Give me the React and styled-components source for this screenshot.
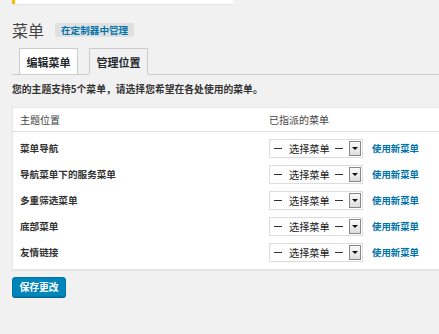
import React from "react";
import styled, { createGlobalStyle } from "styled-components";

const GlobalStyle = createGlobalStyle`
  html, body {
    margin: 0;
    padding: 0;
    background: #f1f1f1;
    overflow: hidden;
  }
  body {
    font-family: "Noto Sans CJK SC", "Liberation Sans", sans-serif;
    color: #444;
  }
`

const Page = styled.div`
  width: 439px;
  height: 334px;
  padding-left: 12px;
  box-sizing: border-box;
`

const Notice = styled.div`
  width: 218px;
  height: 4px;
  background: #fff;
  border-left: 3px solid #ffb900;
  box-shadow: 0 1px 1px rgba(0, 0, 0, 0.06);
`

const TitleRow = styled.div`
  display: flex;
  align-items: center;
  gap: 11px;
  margin-top: 15px;
  height: 22px;
`

const Title = styled.h1`
  margin: 0;
  font-size: 16px;
  font-weight: 400;
  color: #444;
  line-height: 22px;
`

const CustomizeLink = styled.a`
  display: inline-block;
  background: #e0e0e0;
  color: #0073aa;
  font-size: 9.6px;
  font-weight: 700;
  padding: 0 6px;
  height: 14px;
  line-height: 14px;
  border-radius: 2px;
  text-decoration: none;
`

const TabNav = styled.div`
  display: flex;
  gap: 11px;
  margin-top: 7px;
  padding-left: 7px;
  border-bottom: 1px solid #ccc;
  height: 26px;
`

const Tab = styled.div`
  width: 59px;
  box-sizing: border-box;
  border: 1px solid #ccc;
  border-bottom: ${p => (p.$active ? "1px solid #f1f1f1" : "none")};
  background: ${p => (p.$active ? "#f1f1f1" : "#fff")};
  color: #23282d;
  font-size: 11px;
  font-weight: 700;
  display: flex;
  align-items: center;
  justify-content: center;
  height: ${p => (p.$active ? "27px" : "26px")};
`

const Description = styled.p`
  margin: 7px 0 0;
  font-size: 9.8px;
  font-weight: 700;
  color: #333;
  line-height: 14px;
`

const Table = styled.div`
  margin-top: 11px;
  background: #fff;
  border: 1px solid #e5e5e5;
  border-right: none;
  box-shadow: 0 1px 1px rgba(0, 0, 0, 0.04);
  padding-bottom: 4px;
`

const HeadRow = styled.div`
  display: grid;
  grid-template-columns: 249px 1fr;
  height: 23px;
  align-items: center;
  border-bottom: 1px solid #e1e1e1;
  font-size: 10px;
  color: #444;
  padding-left: 7px;
`

const Row = styled.div`
  display: grid;
  grid-template-columns: 249px 1fr;
  align-items: center;
  height: 26px;
  padding-left: 7px;
  &:nth-of-type(2) {
    margin-top: 3px;
  }
`

const Location = styled.div`
  font-size: 9.6px;
  font-weight: 700;
  color: #333;
`

const Actions = styled.div`
  display: flex;
  align-items: center;
  gap: 9px;
`

const Select = styled.div`
  width: 94px;
  height: 19px;
  box-sizing: border-box;
  border: 1px solid #ddd;
  background: #fff;
  display: flex;
  align-items: center;
  padding: 0 1px 0 4px;
  font-size: 10.2px;
  color: #222;
`

const Dash = styled.span`
  display: inline-block;
  width: 8px;
  height: 1px;
  background: #333;
  margin: 0 ${p => p.$right || 0}px 0 ${p => p.$left || 0}px;
`

const Arrow = styled.div`
  margin-left: auto;
  width: 12px;
  height: 15px;
  box-sizing: border-box;
  border: 1px solid #888;
  background: linear-gradient(#fafafa, #ddd);
  display: flex;
  align-items: center;
  justify-content: center;
  &::after {
    content: "";
    border-left: 3px solid transparent;
    border-right: 3px solid transparent;
    border-top: 3px solid #111;
  }
`

const UseNew = styled.a`
  color: #0073aa;
  font-size: 9.4px;
  font-weight: 700;
  text-decoration: none;
`

const SaveButton = styled.button`
  display: block;
  margin-top: 7px;
  width: 54px;
  height: 20px;
  padding: 0;
  border: 1px solid #0073aa;
  border-radius: 3px;
  background: #0085ba;
  color: #fff;
  font-family: "Noto Sans CJK SC", sans-serif;
  font-size: 9.8px;
  font-weight: 700;
  box-shadow: 0 1px 0 #006799;
`

const locations = ["菜单导航", "导航菜单下的服务菜单", "多重筛选菜单", "底部菜单", "友情链接"]

export default function App() {
  return <Page>
    <GlobalStyle />
    <Notice />
    <TitleRow>
      <Title>菜单</Title>
      <CustomizeLink href="#">在定制器中管理</CustomizeLink>
    </TitleRow>
    <TabNav>
      <Tab>编辑菜单</Tab>
      <Tab $active>管理位置</Tab>
    </TabNav>
    <Description>您的主题支持5个菜单，请选择您希望在各处使用的菜单。</Description>
    <Table>
      <HeadRow>
        <span>主题位置</span>
        <span>已指派的菜单</span>
      </HeadRow>
      {locations.map(name => (
        <Row key={name}>
          <Location>{name}</Location>
          <Actions>
            <Select>
              <Dash $right={7} />
              <span>选择菜单</span>
              <Dash $left={5} />
              <Arrow />
            </Select>
            <UseNew href="#">使用新菜单</UseNew>
          </Actions>
        </Row>
      ))}
    </Table>
    <SaveButton>保存更改</SaveButton>
  </Page>
}
